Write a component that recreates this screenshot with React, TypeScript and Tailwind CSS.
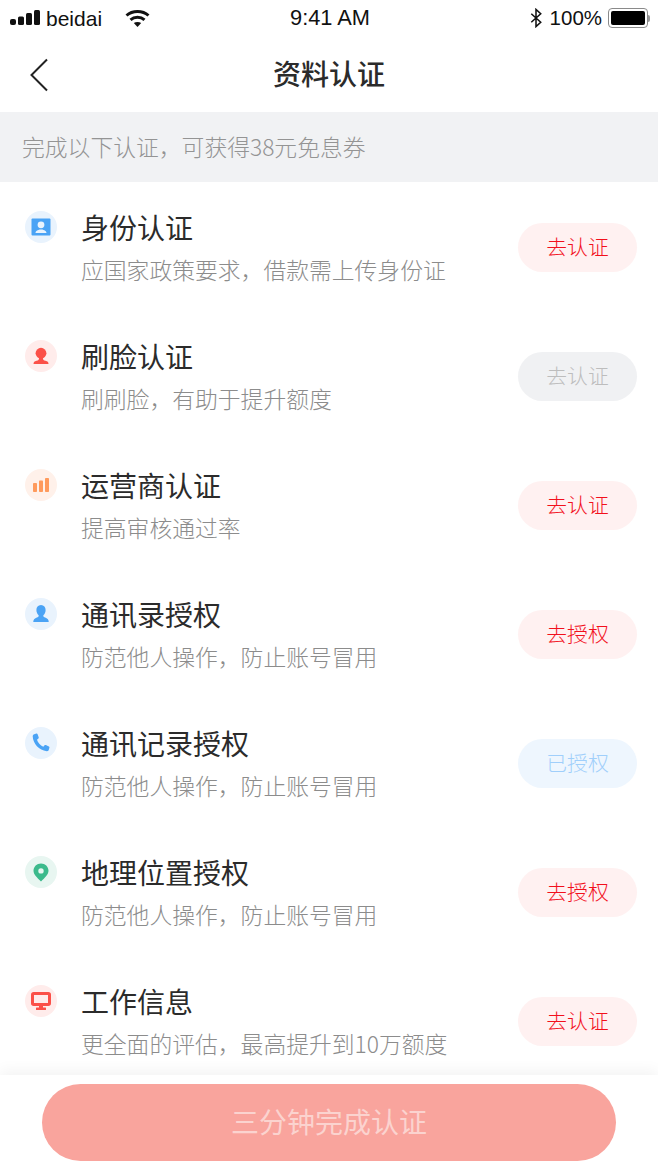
import React from 'react';

const FONT = "font-['Liberation_Sans','Noto_Sans_CJK_SC',sans-serif]";
const CJK = "font-['Noto_Sans_CJK_SC',sans-serif]";

type Tone = 'red' | 'gray' | 'blue';

const TONES: Record<Tone, string> = {
  red: 'bg-[#fff1f1] text-[#f2101c]',
  gray: 'bg-[#f0f1f3] text-[#bdbdbd]',
  blue: 'bg-[#eef6fe] text-[#a0cffb]',
};

function CardIcon() {
  return (
    <svg width="20" height="18" viewBox="0 0 20 18">
      <rect x="0.5" y="0.5" width="19" height="17" rx="1" fill="#4aa3f5" />
      <circle cx="10" cy="6.800" r="3.400" fill="#e9f3fd" />
      <path d="M4.500 15c0-2.600 3-3 4-3.600h3c1 .6 4 1 4 3.600z" fill="#e9f3fd" />
    </svg>
  );
}

function FaceIcon() {
  return (
    <svg width="18" height="18" viewBox="0 0 18 18">
      <circle cx="9" cy="6.200" r="5.400" fill="#fb5048" />
      <path d="M1.500 17c0-2 1-2.800 3-3.200 1.800-.4 2.600-.8 2.600-3h3.800c0 2.200.8 2.600 2.600 3 2 .4 3 1.200 3 3.200z" fill="#fb5048" />
    </svg>
  );
}

function BarsIcon() {
  return (
    <svg width="18" height="16" viewBox="0 0 18 16">
      <rect x="1" y="6" width="4" height="9" rx="0.800" fill="#ff9a5c" />
      <rect x="7" y="3.500" width="4" height="11.500" rx="0.800" fill="#ff9a5c" />
      <rect x="13" y="1" width="4" height="14" rx="0.800" fill="#ff9a5c" />
    </svg>
  );
}

function PersonIcon() {
  return (
    <svg width="18" height="20" viewBox="0 0 18 20">
      <path d="M9 1c3 0 4.600 2.200 4.600 5 0 2.400-1 4-2 5-.6.8-.3 1.800.8 2.300 1.800.8 3.600 1.200 4.100 3.200.2.800.2 1.500.2 1.500H1.300s0-.7.2-1.500c.5-2 2.300-2.400 4.100-3.200 1.100-.5 1.400-1.500.8-2.300-1-1-2-2.600-2-5C4.400 3.200 6 1 9 1z" fill="#4aa3f5" />
    </svg>
  );
}

function PhoneIcon() {
  return (
    <svg width="20" height="20" viewBox="0 0 20 20">
      <path d="M3.200 1.200 5.400.6c.6-.1 1 .1 1.200.7l1.100 3c.2.500.1.900-.3 1.200L6 6.700c.7 2.800 3.300 5.800 6.300 7l1.300-1.400c.4-.4.800-.5 1.300-.2l3 1.500c.5.300.7.700.5 1.200l-.7 2.200c-.3.800-1 1.300-1.900 1.200C8 17.500 2 10.600 1.700 3.300c0-1 .6-1.800 1.500-2.100z" fill="#4aa3f5" />
    </svg>
  );
}

function PinIcon() {
  return (
    <svg width="16" height="19" viewBox="0 0 16 19">
      <path fillRule="evenodd" d="M8 .5c4.200 0 7.500 3.200 7.500 7.300 0 3.700-3.500 6.800-7.500 10.700C4 14.600.5 11.500.5 7.800.5 3.700 3.800.5 8 .5zm0 4.700a2.700 2.700 0 1 0 0 5.400 2.700 2.700 0 0 0 0-5.400z" fill="#3cba8c" />
    </svg>
  );
}

function ScreenIcon() {
  return (
    <svg width="20" height="18" viewBox="0 0 20 18">
      <rect x="1.500" y="1.500" width="17" height="11" rx="1.200" fill="#ffeceb" stroke="#fb5048" strokeWidth="3" />
      <rect x="8" y="13" width="4" height="3" fill="#fb5048" />
      <rect x="5" y="15.500" width="10" height="2.500" rx="0.500" fill="#fb5048" />
    </svg>
  );
}

const ROWS: { title: string; sub: string; action: string; tone: Tone; circle: string; icon: React.ReactNode }[] = [
  { title: '身份认证', sub: '应国家政策要求，借款需上传身份证', action: '去认证', tone: 'red', circle: 'bg-[#e9f3fd]', icon: <CardIcon /> },
  { title: '刷脸认证', sub: '刷刷脸，有助于提升额度', action: '去认证', tone: 'gray', circle: 'bg-[#ffeceb]', icon: <FaceIcon /> },
  { title: '运营商认证', sub: '提高审核通过率', action: '去认证', tone: 'red', circle: 'bg-[#fff1ea]', icon: <BarsIcon /> },
  { title: '通讯录授权', sub: '防范他人操作，防止账号冒用', action: '去授权', tone: 'red', circle: 'bg-[#e9f3fd]', icon: <PersonIcon /> },
  { title: '通讯记录授权', sub: '防范他人操作，防止账号冒用', action: '已授权', tone: 'blue', circle: 'bg-[#e9f3fd]', icon: <PhoneIcon /> },
  { title: '地理位置授权', sub: '防范他人操作，防止账号冒用', action: '去授权', tone: 'red', circle: 'bg-[#e8f6f1]', icon: <PinIcon /> },
  { title: '工作信息', sub: '更全面的评估，最高提升到10万额度', action: '去认证', tone: 'red', circle: 'bg-[#ffeceb]', icon: <ScreenIcon /> },
];

function StatusBar() {
  return (
    <div className="h-10 shrink-0 flex items-center text-[#111] pb-1">
      <div className="flex-1 flex items-center pl-[10px]">
        <svg width="30" height="16" viewBox="0 0 30 16" fill="#111">
          <rect x="0" y="9" width="6" height="6" rx="2" />
          <rect x="8" y="6.500" width="6" height="8.500" rx="1.500" />
          <rect x="16" y="3" width="6" height="12" rx="1.500" />
          <rect x="24" y="0" width="6" height="15" rx="1.500" />
        </svg>
        <span className="ml-[6px] text-[21px] leading-none">beidai</span>
        <svg className="ml-[23px] mt-[1px]" width="25" height="19" viewBox="0 0 25 19" fill="none" stroke="#111" strokeWidth="3">
          <path d="M1.500 6.500c6-5.300 16-5.300 22 0" />
          <path d="M5.500 10.800c3.800-3.300 10.200-3.300 14 0" />
          <path d="M12.500 18l-3.700-4c2-1.500 5.400-1.500 7.400 0z" fill="#111" stroke="none" />
        </svg>
      </div>
      <div className="text-[21.800px] leading-none">9:41 AM</div>
      <div className="flex-1 flex items-center justify-end pr-[8px]">
        <svg width="12" height="20" viewBox="0 0 14 22" fill="none" stroke="#111" strokeWidth="1.800">
          <path d="M1.500 6l11 10-5.500 5V1l5.500 5-11 10" />
        </svg>
        <span className="ml-[8px] text-[20.500px] leading-none">100%</span>
        <div className="ml-[6px] flex items-center">
          <div className="w-[40px] h-[20px] rounded-[4px] border border-[#8a8a8a] p-[2px]">
            <div className="w-full h-full rounded-[2px] bg-black" />
          </div>
          <div className="w-[2px] h-[7px] bg-[#999] rounded-r-sm" />
        </div>
      </div>
    </div>
  );
}

export default function App() {
  return (
    <div className={`${FONT} w-[658px] h-[1170px] bg-white flex flex-col overflow-hidden`}>
      <StatusBar />

      {/* Nav */}
      <div className="h-[72px] shrink-0 flex items-center justify-center relative">
        <svg className="absolute left-[29px] top-[18px]" width="20" height="34" viewBox="0 0 20 34" fill="none" stroke="#222" strokeWidth="2">
          <path d="M18 1.500 2.500 17 18 32.500" />
        </svg>
        <h1 className="text-[28px] leading-[34px] font-medium text-[#2b2b2b]">资料认证</h1>
      </div>

      <div className={`${CJK} h-[70px] shrink-0 bg-[#f1f2f4] flex items-center pl-[22px] pt-[1px] font-light text-[22.800px] text-[#949494] leading-none`}>
        完成以下认证，可获得38元免息券
      </div>

      {/* List */}
      <div className="flex-1 min-h-0 overflow-hidden pl-[25px] pr-[21px]">
        {ROWS.map((row) => (
          <div key={row.title} className="h-[129px] pt-[29px] flex items-start">
            <div className={`w-[32px] h-[32px] rounded-full shrink-0 flex items-center justify-center ${row.circle}`}>
              {row.icon}
            </div>
            <div className="ml-[24px] flex-1">
              <div className="pt-[2px] text-[28px] leading-[34px] text-[#2b2b2b]">{row.title}</div>
              <div className={`${CJK} mt-[7px] font-light text-[22.800px] leading-[32px] text-[#8c8c8c]`}>{row.sub}</div>
            </div>
            <div className={`mt-[12px] w-[119px] h-[49px] rounded-full flex items-center justify-center pt-[1px] font-light text-[20.800px] leading-none ${TONES[row.tone]}`}>
              {row.action}
            </div>
          </div>
        ))}
      </div>

      {/* Footer */}
      <div className="h-[95px] shrink-0 bg-white shadow-[0_-4px_14px_rgba(0,0,0,0.05)] relative pt-[9px] px-[42px]">
        <div className="h-[77px] rounded-full bg-[#f9a49d] flex items-center justify-center pt-[3px] text-[28px] leading-none text-[#fbd3cf]">
          三分钟完成认证
        </div>
      </div>
    </div>
  );
}
